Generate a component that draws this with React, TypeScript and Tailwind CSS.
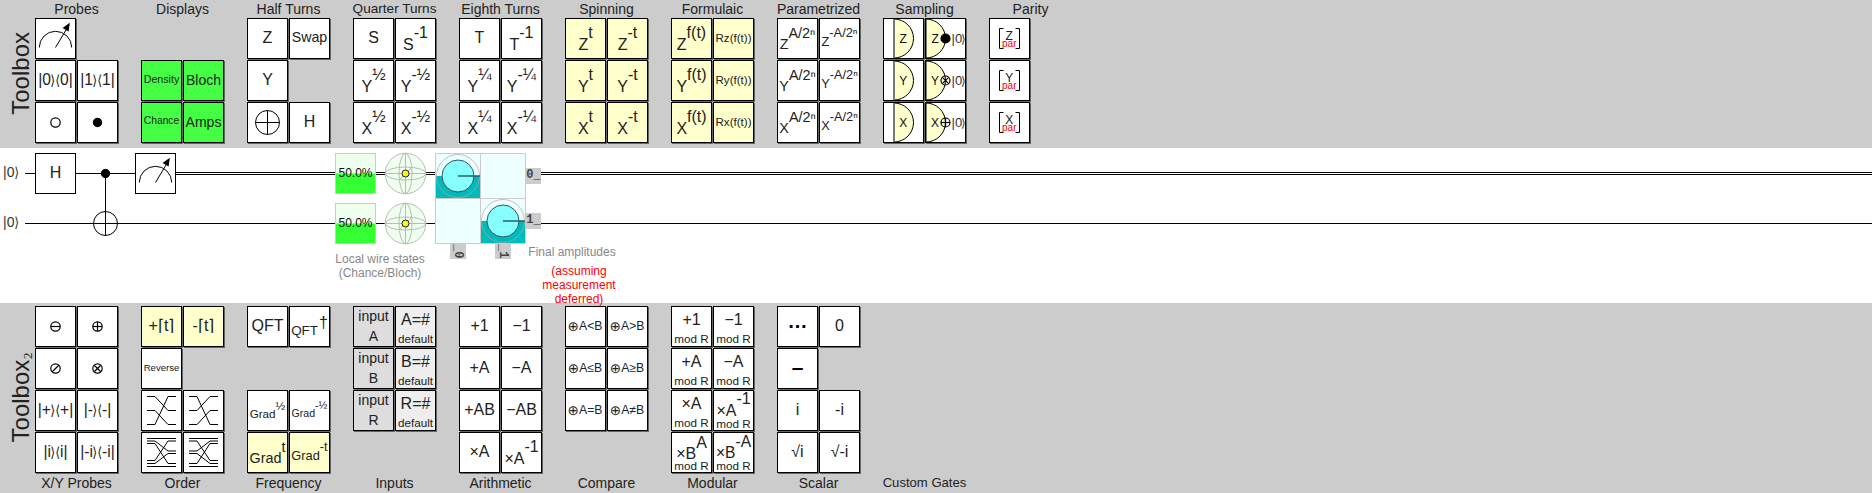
import React from 'react';

type Kids = { children?: React.ReactNode };

const tones = {
  white: 'bg-white',
  cream: 'bg-[#ffffcc]',
  green: 'bg-[#44ff44]',
  gray: 'bg-[#dddddd]',
  light: 'bg-[#eeeeee]',
};

function Tile({ tone = 'white', children }: Kids & { tone?: keyof typeof tones }) {
  return (
    <div
      className={`flex h-[41px] w-[41px] justify-center overflow-visible border border-black whitespace-nowrap text-[#222] shadow-[1px_1px_0_#666] ${tones[tone]}`}
    >
      {children}
    </div>
  );
}

/** A single centred symbol. */
function Sym({ c = 'pb-[1px] text-[16px]', children }: Kids & { c?: string }) {
  return <span className={`flex items-center self-center leading-none ${c}`}>{children}</span>;
}

const powSizes = {
  full: { font: 'text-[16px]', base: 'mt-[18px]', exp: 'mt-[6px]' },
  large: { font: 'text-[14.4px]', base: 'mt-[17.5px]', exp: 'mt-[7px]' },
  medium: { font: 'text-[12.8px]', base: 'mt-[17px]', exp: 'mt-[8px]' },
  small: { font: 'text-[11.7px]', base: 'mt-[17px]', exp: 'mt-[9px]' },
  tiny: { font: 'text-[10.6px]', base: 'mt-[17px]', exp: 'mt-[9px]' },
  mod: { font: 'text-[16px]', base: 'mt-[12px]', exp: 'mt-[0px]' },
  modB: { font: 'text-[16px]', base: 'mt-[13px]', exp: 'mt-[2px]' },
  modBneg: { font: 'text-[15.6px]', base: 'mt-[12px]', exp: 'mt-[1px]' },
};

/** A base with a raised exponent. */
function Pow({ b, e, s = 'full' }: { b: string; e: React.ReactNode; s?: keyof typeof powSizes }) {
  const z = powSizes[s];
  return (
    <span className={`flex items-start leading-none ${z.font}`}>
      <span className={z.base}>{b}</span>
      <span className={z.exp}>{e}</span>
    </span>
  );
}

function Angle({ children }: Kids) {
  return (
    <span className="inline-block w-[4.6px] text-center font-['DejaVu_Sans'] text-[14px]">
      <span className="-mx-[2px] inline-block scale-x-90">{children}</span>
    </span>
  );
}

function Projector({ v }: { v: string }) {
  return (
    <span className="flex items-center self-center pb-[2px] text-[15.6px] leading-none">
      |{v}
      <Angle>⟩</Angle>
      <Angle>⟨</Angle>
      {v}|
    </span>
  );
}

function Stack({ top, bottom, small }: { top: string; bottom: string; small?: boolean }) {
  return (
    <span className="flex flex-col items-center leading-none">
      <span className={small ? 'mt-[2px] text-[14px]' : 'mt-[5px] text-[16px]'}>{top}</span>
      <span className={small ? 'mt-[6px] text-[14px]' : 'mt-[5px] text-[11.7px]'}>{bottom}</span>
    </span>
  );
}

function ModPow({ b, e, s }: { b: string; e: string; s: 'mod' | 'modB' | 'modBneg' }) {
  return (
    <span className="grid justify-items-center">
      <span className="col-start-1 row-start-1 flex h-[26px] overflow-visible">
        <Pow b={b} e={e} s={s} />
      </span>
      <span className="col-start-1 row-start-2 leading-none text-[11.7px]">mod R</span>
    </span>
  );
}

function Art({ children }: Kids) {
  return (
    <svg className="-m-px h-[41px] w-[41px] shrink-0" viewBox="0 0 41 41" fill="none" stroke="#000">
      {children}
    </svg>
  );
}

function Meter() {
  return (
    <Art>
      <path d="M4.3 29.5a16.2 16.2 0 0 1 32.4 0M20.5 29.5L31 12" />
      <path d="M34.8 4.8L33.6 13.6L27.6 10Z" fill="#000" stroke="none" />
    </Art>
  );
}

function Ring({ kind, x = 20.5, y = 20.5, r = 4.7 }: { kind: 'minus' | 'plus' | 'slash' | 'times' | 'open' | 'dot'; x?: number; y?: number; r?: number }) {
  const d = r * 0.7;
  return (
    <g strokeWidth={r < 6 ? 1.2 : 1}>
      <circle cx={x} cy={y} r={r} fill={kind === 'dot' ? '#000' : 'none'} />
      {(kind === 'minus' || kind === 'plus') && <path d={`M${x - r} ${y}h${2 * r}`} />}
      {kind === 'plus' && <path d={`M${x} ${y - r}v${2 * r}`} />}
      {(kind === 'slash' || kind === 'times') && <path d={`M${x - d} ${y + d}L${x + d} ${y - d}`} />}
      {kind === 'times' && <path d={`M${x - d} ${y - d}L${x + d} ${y + d}`} />}
    </g>
  );
}

function Detector({ axis }: { axis: string }) {
  return (
    <Art>
      <path d="M11 1A19.5 19.5 0 0 1 11 40Z" fill="#ffffcc" />
      <path d="M11 1V40" stroke="#777" strokeWidth="2" />
      <text x="20.2" y="24.9" fontSize="12" textAnchor="middle" fill="#111" stroke="none">{axis}</text>
    </Art>
  );
}

function DetectReset({ axis, kind }: { axis: string; kind: 'dot' | 'times' | 'plus' }) {
  return (
    <Art>
      <path d="M1 1A19.5 19.5 0 0 1 1 40Z" fill="#ffffcc" />
      <path d="M.5 0V41" stroke="#000" />
      <text x="10.1" y="24.9" fontSize="12" textAnchor="middle" fill="#111" stroke="none">{axis}</text>
      <Ring kind={kind} x={20.5} y={20.5} r={4.5} />
      <g fill="#333" stroke="none" fontSize="13">
        <text x="26.6" y="25">|0</text>
        <text x="35.9" y="25" fontSize="12" fontFamily="DejaVu Sans">⟩</text>
      </g>
    </Art>
  );
}

function Parity({ axis }: { axis: string }) {
  return (
    <Art>
      <path d="M14.5 10.5H10.5V30.5H14.5M26.5 10.5H30.5V30.5H26.5" stroke="#000" />
      <text x="20.2" y="22.3" fontSize="12" textAnchor="middle" fill="#222" stroke="none">{axis}</text>
      <text x="20.3" y="28.5" fontSize="10" textAnchor="middle" fill="#f00" stroke="none">par</text>
    </Art>
  );
}

function Cmp({ op }: { op: string }) {
  return (
    <span className="flex items-center self-center pb-[1px] text-[12.2px] leading-none">
      <span className="mr-[1px] -ml-[1px] w-[10.5px] pt-[1px] font-['DejaVu_Sans'] text-[13.5px]">⊕</span>A{op}B
    </span>
  );
}

function Group({ title, c = 'text-[14px]', below, children }: Kids & { title: string; c?: string; below?: boolean }) {
  const label = (
    <div className={`flex h-[18px] w-[83px] shrink-0 items-center justify-center leading-none whitespace-nowrap text-[#222] ${c}`}>{title}</div>
  );
  return (
    <div className="flex w-[83px] flex-col">
      {!below && label}
      <div className={`grid shrink-0 grid-cols-[41px_41px] gap-px ${below ? 'h-[168px] grid-rows-[repeat(4,41px)]' : 'grid-rows-[repeat(3,41px)]'}`}>{children}</div>
      {below && label}
    </div>
  );
}

const Gap = () => <div />;

function TopToolbox() {
  return (
    <div className="flex h-[148px] bg-[#cccccc]">
      <div className="flex w-[35px] items-end justify-center pb-[33px] pl-[6px]">
        <span className="rotate-180 text-[24px] leading-none text-[#222] [writing-mode:vertical-rl]">Toolbox</span>
      </div>
      <div className="flex gap-[23px]">
        <Group title="Probes">
          <Tile><Meter /></Tile><Gap />
          <Tile><Projector v="0" /></Tile><Tile><Projector v="1" /></Tile>
          <Tile><Art><Ring kind="open" /></Art></Tile><Tile><Art><Ring kind="dot" r={4.1} /></Art></Tile>
        </Group>
        <Group title="Displays">
          <Gap /><Gap />
          <Tile tone="green"><Sym c="pb-[2px] text-[10.7px]">Density</Sym></Tile><Tile tone="green"><Sym c="pb-[2px] text-[14px]">Bloch</Sym></Tile>
          <Tile tone="green"><Sym c="pb-[2px] text-[10.3px]">Chance</Sym></Tile><Tile tone="green"><Sym c="pb-[2px] text-[14px]">Amps</Sym></Tile>
        </Group>
        <Group title="Half Turns">
          <Tile><Sym>Z</Sym></Tile><Tile><Sym c="pb-[2px] text-[14.2px]">Swap</Sym></Tile>
          <Tile><Sym>Y</Sym></Tile><Gap />
          <Tile><Art><Ring kind="plus" r={12} /></Art></Tile><Tile><Sym>H</Sym></Tile>
        </Group>
        <Group title="Quarter Turns" c="text-[13.6px]">
          <Tile><Sym>S</Sym></Tile><Tile><Pow b="S" e="-1" /></Tile>
          <Tile><Pow b="Y" e="½" /></Tile><Tile><Pow b="Y" e="-½" /></Tile>
          <Tile><Pow b="X" e="½" /></Tile><Tile><Pow b="X" e="-½" /></Tile>
        </Group>
        <Group title="Eighth Turns">
          <Tile><Sym>T</Sym></Tile><Tile><Pow b="T" e="-1" /></Tile>
          <Tile><Pow b="Y" e="¼" /></Tile><Tile><Pow b="Y" e="-¼" /></Tile>
          <Tile><Pow b="X" e="¼" /></Tile><Tile><Pow b="X" e="-¼" /></Tile>
        </Group>
        <Group title="Spinning">
          {['Z', 'Y', 'X'].map((a) => (
            <React.Fragment key={a}>
              <Tile tone="cream"><Pow b={a} e="t" /></Tile><Tile tone="cream"><Pow b={a} e="-t" /></Tile>
            </React.Fragment>
          ))}
        </Group>
        <Group title="Formulaic">
          {['Z', 'Y', 'X'].map((a) => (
            <React.Fragment key={a}>
              <Tile tone="cream"><Pow b={a} e="f(t)" /></Tile>
              <Tile tone="cream"><Sym c="pb-[1px] text-[11.6px]">R{a.toLowerCase()}(f(t))</Sym></Tile>
            </React.Fragment>
          ))}
        </Group>
        <Group title="Parametrized">
          {['Z', 'Y', 'X'].map((a) => (
            <React.Fragment key={a}>
              <Tile><Pow b={a} e="A/2ⁿ" s="large" /></Tile><Tile><Pow b={a} e="-A/2ⁿ" s="medium" /></Tile>
            </React.Fragment>
          ))}
        </Group>
        <Group title="Sampling">
          <Tile><Detector axis="Z" /></Tile><Tile><DetectReset axis="Z" kind="dot" /></Tile>
          <Tile><Detector axis="Y" /></Tile><Tile><DetectReset axis="Y" kind="times" /></Tile>
          <Tile><Detector axis="X" /></Tile><Tile><DetectReset axis="X" kind="plus" /></Tile>
        </Group>
        <Group title="Parity">
          <Tile><Parity axis="Z" /></Tile><Gap />
          <Tile><Parity axis="Y" /></Tile><Gap />
          <Tile><Parity axis="X" /></Tile><Gap />
        </Group>
      </div>
    </div>
  );
}

function BottomToolbox() {
  return (
    <div className="flex h-[190px] bg-[#cccccc] pt-[3px]">
      <div className="flex w-[35px] items-end justify-center pb-[51px] pl-[6px]">
        <span className="rotate-180 text-[24px] leading-none text-[#222] [writing-mode:vertical-rl]">
          Toolbox<span className="font-['Liberation_Serif'] text-[22px]">₂</span>
        </span>
      </div>
      <div className="flex gap-[23px]">
        <Group below title="X/Y Probes">
          <Tile><Art><Ring kind="minus" /></Art></Tile><Tile><Art><Ring kind="plus" /></Art></Tile>
          <Tile><Art><Ring kind="slash" /></Art></Tile><Tile><Art><Ring kind="times" /></Art></Tile>
          <Tile><Projector v="+" /></Tile><Tile><Projector v="-" /></Tile>
          <Tile><Projector v="i" /></Tile><Tile><Projector v="-i" /></Tile>
        </Group>
        <Group below title="Order">
          <Tile tone="cream"><Sym>+⌈t⌉</Sym></Tile><Tile tone="cream"><Sym>-⌈t⌉</Sym></Tile>
          <Tile><Sym c="pb-[2px] text-[9.6px]">Reverse</Sym></Tile><Gap />
          <Tile><Art><path d="M6 6.5H14L27 20.5H35M6 20.5H14L27 34.5H35M6 34.5H14L27 6.5H35" /></Art></Tile>
          <Tile><Art><path d="M6 6.5H14L27 34.5H35M6 20.5H14L27 6.5H35M6 34.5H14L27 20.5H35" /></Art></Tile>
          <Tile><Art><path d="M6 6.5H35M6 34.5H35M6 9H14L27 19H35M6 11.5H14L27 31.5H35M6 28.5H14L27 9H35M6 31.5H14L27 21.5H35" /></Art></Tile>
          <Tile><Art><path d="M6 6.5H35M6 34.5H35M6 19H14L27 9H35M6 31.5H14L27 11.5H35M6 9H14L27 28.5H35M6 21.5H14L27 31.5H35" /></Art></Tile>
        </Group>
        <Group below title="Frequency">
          <Tile><Sym>QFT</Sym></Tile>
          <Tile>
            <span className="flex items-start leading-none">
              <span className="mt-[17px] text-[13.4px]">QFT</span>
              <span className="mt-[8px] ml-[1px] text-[16px]">†</span>
            </span>
          </Tile>
          <Gap /><Gap />
          <Tile><Pow b="Grad" e="½" s="small" /></Tile><Tile><Pow b="Grad" e="-½" s="tiny" /></Tile>
          <Tile tone="cream"><Pow b="Grad" e="t" s="large" /></Tile><Tile tone="cream"><Pow b="Grad" e="-t" s="medium" /></Tile>
        </Group>
        <Group below title="Inputs">
          {['A', 'B', 'R'].map((v) => (
            <React.Fragment key={v}>
              <Tile tone="gray"><Stack top="input" bottom={v} small /></Tile>
              <Tile tone="light"><Stack top={`${v}=#`} bottom="default" /></Tile>
            </React.Fragment>
          ))}
        </Group>
        <Group below title="Arithmetic">
          <Tile><Sym>+1</Sym></Tile><Tile><Sym>−1</Sym></Tile>
          <Tile><Sym>+A</Sym></Tile><Tile><Sym>−A</Sym></Tile>
          <Tile><Sym>+AB</Sym></Tile><Tile><Sym>−AB</Sym></Tile>
          <Tile><Sym>×A</Sym></Tile><Tile><Pow b="×A" e="-1" /></Tile>
        </Group>
        <Group below title="Compare">
          <Tile><Cmp op="<" /></Tile><Tile><Cmp op=">" /></Tile>
          <Tile><Cmp op="≤" /></Tile><Tile><Cmp op="≥" /></Tile>
          <Tile><Cmp op="=" /></Tile><Tile><Cmp op="≠" /></Tile>
        </Group>
        <Group below title="Modular">
          <Tile><Stack top="+1" bottom="mod R" /></Tile><Tile><Stack top="−1" bottom="mod R" /></Tile>
          <Tile><Stack top="+A" bottom="mod R" /></Tile><Tile><Stack top="−A" bottom="mod R" /></Tile>
          <Tile><Stack top="×A" bottom="mod R" /></Tile><Tile><ModPow b="×A" e="-1" s="mod" /></Tile>
          <Tile><ModPow b="×B" e="A" s="modB" /></Tile><Tile><ModPow b="×B" e="-A" s="modBneg" /></Tile>
        </Group>
        <Group below title="Scalar">
          <Tile><Sym c="pb-[11px] text-[20px] font-bold text-black">…</Sym></Tile><Tile><Sym>0</Sym></Tile>
          <Tile><Sym c="pb-[5px] text-[21px] font-bold text-black">–</Sym></Tile><Gap />
          <Tile><Sym>i</Sym></Tile><Tile><Sym>-i</Sym></Tile>
          <Tile><Sym>√i</Sym></Tile><Tile><Sym>√-i</Sym></Tile>
        </Group>
        <Group below title="Custom Gates" c="text-[13.1px]" />
      </div>
    </div>
  );
}

function Bloch({ y }: { y: number }) {
  return (
    <g transform={`translate(405.5 ${y})`} fill="none" stroke="#bbb">
      <circle r="20.3" fill="#eeffee" />
      <ellipse rx="20.3" ry="6.5" />
      <ellipse rx="6.5" ry="20.3" />
      <path d="M-20.3 0H20.3M0-20.3V20.3M-6 6L6-6" />
      <circle r="3.5" fill="#ffff00" stroke="#222" />
    </g>
  );
}

function Amplitude({ x, y }: { x: number; y: number }) {
  return (
    <g transform={`translate(${x} ${y})`} fill="none">
      <path d="M.5 22.5h44v22h-44z" fill="#00bbbb" stroke="none" />
      <circle cx="22.5" cy="22.5" r="21.5" stroke="#aaa" strokeOpacity=".7" />
      <circle cx="22.5" cy="22.5" r="16" fill="#88ffff" stroke="#356" />
    </g>
  );
}

function Ket({ c }: { c: string }) {
  return (
    <div className={`absolute left-[3px] flex items-center text-[14px] leading-none text-[#333] ${c}`}>
      |0<Angle>⟩</Angle>
    </div>
  );
}

function Circuit() {
  return (
    <div className="relative z-10 h-[155px] bg-white">
      <svg className="absolute top-0 left-0 h-[155px] w-[1872px]" viewBox="0 148 1872 155" fill="none" stroke="#000">
        <path shapeRendering="crispEdges" d="M25 173.5H176M176 172.5H1872M176 174.5H1872M25 223.5H1872M105.5 173.5V235.5" />
        <circle cx="105.5" cy="173.5" r="4.2" fill="#000" />
        <circle cx="105.5" cy="223.5" r="12" />
        {[173.5, 223.5].map((y) => (
          <g key={y}>
            <rect x="335.5" y={y - 20} width="40" height="40" fill="#eeffee" stroke="none" />
            <rect x="335.5" y={y} width="40" height="20" fill="#33ff33" stroke="none" />
            <rect x="335.5" y={y - 20} width="40" height="40" stroke="#ccc" />
            <Bloch y={y} />
          </g>
        ))}
        <rect x="435.5" y="153.5" width="90" height="90" fill="#eeffff" stroke="none" />
        <Amplitude x={435.5} y={153.5} />
        <Amplitude x={480.5} y={198.5} />
        <path d="M435.5 153.5h90v90h-90zM480.5 153.5v90M435.5 198.5h90" stroke="#ccc" />
        <path d="M458 176H480M503 221H525" stroke="#246068" strokeWidth="1.6" />
      </svg>
      <Ket c="top-[17px]" />
      <Ket c="top-[67px]" />
      <div className="absolute top-[5px] left-[35px] flex h-[41px] w-[41px] justify-center border border-black bg-white text-[#222]">
        <Sym>H</Sym>
      </div>
      <div className="absolute top-[5px] left-[135px] flex h-[41px] w-[41px] justify-center border border-black bg-white">
        <Meter />
      </div>
      <div className="absolute top-[19px] left-[335px] w-[41px] text-center text-[12px] leading-none text-[#111]">50.0%</div>
      <div className="absolute top-[69px] left-[335px] w-[41px] text-center text-[12px] leading-none text-[#111]">50.0%</div>
      <div className="absolute top-[20px] left-[526px] h-[16px] w-[15px] bg-[#ccc] text-center font-['Liberation_Mono'] text-[12px] leading-[14px] font-bold text-[#444]">0_</div>
      <div className="absolute top-[65px] left-[526px] h-[16px] w-[15px] bg-[#ccc] text-center font-['Liberation_Mono'] text-[12px] leading-[14px] font-bold text-[#444]">1_</div>
      <div className="absolute top-[96px] left-[450px] h-[15px] w-[16px] bg-[#ccc] text-center font-['Liberation_Mono'] text-[12px] leading-[16px] font-bold text-[#444] [writing-mode:vertical-rl]">_0</div>
      <div className="absolute top-[96px] left-[495px] h-[15px] w-[16px] bg-[#ccc] text-center font-['Liberation_Mono'] text-[12px] leading-[16px] font-bold text-[#444] [writing-mode:vertical-rl]">_1</div>
      <div className="absolute top-[104px] left-[330px] w-[100px] text-center text-[12px] leading-[14px] whitespace-nowrap text-[#888]">
        Local wire states<br />(Chance/Bloch)
      </div>
      <div className="absolute top-[97px] left-[522px] w-[100px] text-center text-[12px] leading-[14px] whitespace-nowrap text-[#888]">Final amplitudes</div>
      <div className="absolute top-[116px] left-[529px] w-[100px] text-center text-[12px] leading-[14px] text-[#f00]">
        (assuming<br />measurement<br />deferred)
      </div>
    </div>
  );
}

export default function App() {
  return (
    <div className="flex h-[493px] w-[1872px] flex-col overflow-hidden bg-white font-['Liberation_Sans',Arial,sans-serif]">
      <TopToolbox />
      <Circuit />
      <BottomToolbox />
    </div>
  );
}
